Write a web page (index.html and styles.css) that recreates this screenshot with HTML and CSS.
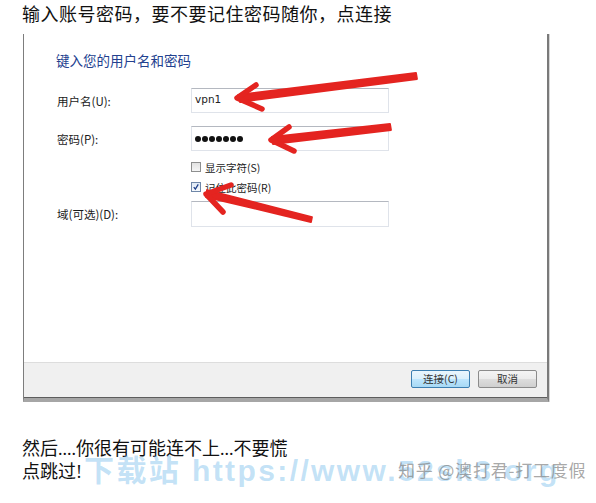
FILE: index.html
```html
<!DOCTYPE html>
<html lang="zh">
<head>
<meta charset="utf-8">
<title>VPN</title>
<link rel="stylesheet" href="styles.css">
</head>
<body>
<div class="page">
  <p class="intro">输入账号密码，要不要记住密码随你，点连接</p>

  <div class="dialog">
    <div class="dialog-body">
      <div class="heading">键入您的用户名和密码</div>

      <div class="row row-user">
        <label class="label">用户名(U):</label>
        <div class="field"><span class="value">vpn1</span></div>
      </div>

      <div class="row row-pass">
        <label class="label">密码(P):</label>
        <div class="field">
          <span class="dots"><i></i><i></i><i></i><i></i><i></i><i></i><i></i></span>
        </div>
      </div>

      <div class="check-row check-first">
        <span class="box"></span><span class="check-text">显示字符(S)</span>
      </div>
      <div class="check-row">
        <span class="box checked">
          <svg viewBox="0 0 10 10" width="10" height="10"><path d="M2.2 5.2 L4.2 7.6 L7.8 1.8" fill="none" stroke="#1d3f8a" stroke-width="1.6"/></svg>
        </span><span class="check-text">记住此密码(R)</span>
      </div>

      <div class="row row-domain">
        <label class="label">域(可选)(D):</label>
        <div class="field field-tall"></div>
      </div>
    </div>
    <div class="dialog-footer">
      <button class="btn btn-default">连接(C)</button>
      <button class="btn">取消</button>
    </div>
  </div>

  <div class="outro">
    <p class="line">然后....你很有可能连不上...不要慌</p>
    <p class="line">点跳过!</p>
  </div>

  <svg class="arrows" viewBox="0 0 596 503" width="596" height="503">
    <g fill="#e42420" stroke="#e42420" stroke-linecap="round" stroke-linejoin="round">
      <polygon points="238,95 416,73 417,79 240,102" stroke-width="1.8"/>
      <polyline points="256,85 237,98 262,109" fill="none" stroke-width="5.5"/>

      <polygon points="272,137 390,124 391,130 273,144" stroke-width="1.8"/>
      <polyline points="289,127 271,140 294,151" fill="none" stroke-width="5.5"/>

      <polygon points="207,190 312,217 311,222 206,197" stroke-width="1.8"/>
      <polyline points="231,185 206,194 223,212" fill="none" stroke-width="5.5"/>
    </g>
  </svg>

  <div class="watermark">下载站 https://www.52sk3.org</div>
  <div class="zhihu">知乎 @澳打君-打工度假</div>
</div>
</body>
</html>
```

FILE: styles.css
```css
* { box-sizing: border-box; }

html, body {
  margin: 0;
  padding: 0;
  background: #ffffff;
}

.page {
  position: relative;
  width: 596px;
  height: 503px;
  overflow: hidden;
  font-family: "Liberation Serif", "Noto Sans CJK SC", serif;
  color: #111;
}

.intro {
  margin: 0;
  padding: 3px 0 0 22px;
  height: 34px;
  font-size: 18px;
  line-height: 20px;
  letter-spacing: 0.5px;
  font-family: "Noto Sans CJK SC", sans-serif;
  font-weight: 400;
  color: #111;
}

.dialog {
  margin-left: 23px;
  width: 526px;
  border-left: 1.5px solid #7d7d7d;
  border-right: 2px solid #7a7a7a;
  border-bottom: 4px solid #a6a6a6;
  box-shadow: 1px 0 0 #d6d6d6;
  background: #ffffff;
  font-family: "Noto Sans CJK SC", sans-serif;
}

.dialog-body {
  height: 328px;
  padding-left: 32px;
  display: flex;
  flex-direction: column;
}

.heading {
  margin-top: 18px;
  font-size: 13.5px;
  line-height: 16px;
  color: #23418f;
}

.row {
  display: flex;
  align-items: center;
}

.row-user { margin-top: 20px; }
.row-pass { margin-top: 13px; }
.row-domain { margin-top: 4px; }

.label {
  width: 135px;
  padding-left: 1px;
  font-size: 11.5px;
  color: #1a1a1a;
}

.field {
  width: 198px;
  height: 25px;
  border: 1px solid #dfe3ea;
  border-top-color: #b4b8c0;
  background: #fff;
  display: flex;
  align-items: center;
  padding-left: 3px;
}

.field-tall { height: 26px; }

.value {
  font-family: "DejaVu Sans", sans-serif;
  font-size: 10.5px;
  color: #222;
  margin-top: -3px;
}

.dots {
  display: flex;
  gap: 1px;
}

.dots i {
  width: 6px;
  height: 6px;
  border-radius: 50%;
  background: #111;
}

.check-row {
  margin-left: 135px;
  height: 20px;
  display: flex;
  align-items: center;
  gap: 4px;
}

.check-first { margin-top: 6px; }

.box {
  width: 10px;
  height: 10px;
  border: 1px solid #8e8f8f;
  background: linear-gradient(#e2e2e2, #f6f6f6);
  display: flex;
  align-items: center;
  justify-content: center;
}

.box svg { display: block; }

.box.checked {
  border-color: #6f87a8;
  background: linear-gradient(#dfe9f5, #f7fafd);
}

.check-text {
  font-size: 10.5px;
  color: #1a1a1a;
}

.dialog-footer {
  height: 36px;
  background: #f0f0f0;
  border-top: 1px solid #dddddd;
  border-bottom: 1px solid #5d5d5d;
  display: flex;
  justify-content: flex-end;
  align-items: center;
  gap: 8px;
  padding-right: 10px;
  padding-bottom: 2px;
}

.btn {
  width: 59px;
  height: 18px;
  margin: 0;
  padding: 0;
  font-family: "Noto Sans CJK SC", sans-serif;
  font-size: 10.5px;
  line-height: 14px;
  color: #333;
  border: 1px solid #8b8b8b;
  border-radius: 2px;
  background: linear-gradient(#f4f4f4 0%, #ebebeb 50%, #dddddd 51%, #cfcfcf 100%);
}

.btn-default {
  border-color: #3c7fb1;
  background: linear-gradient(#eaf6fd 0%, #d9f0fc 50%, #bee6fd 51%, #a7d9f5 100%);
}

.outro {
  margin-top: 36px;
  padding-left: 22px;
}

.line {
  margin: 0;
  font-size: 18px;
  line-height: 23px;
  font-family: "Liberation Serif", "Noto Sans CJK SC", serif;
  color: #111;
}

.arrows {
  position: absolute;
  left: 0;
  top: 0;
  pointer-events: none;
}

.watermark {
  position: absolute;
  left: 84px;
  top: 454px;
  font-family: "Liberation Sans", "Noto Sans CJK SC", sans-serif;
  font-weight: 700;
  font-size: 30px;
  line-height: 34px;
  letter-spacing: 2.4px;
  color: rgba(110, 185, 235, 0.42);
  white-space: nowrap;
}

.zhihu {
  position: absolute;
  left: 398px;
  top: 460px;
  font-family: "Noto Sans CJK SC", sans-serif;
  font-size: 17px;
  line-height: 20px;
  letter-spacing: 0.8px;
  color: rgba(130, 130, 130, 0.7);
  white-space: nowrap;
}
```
